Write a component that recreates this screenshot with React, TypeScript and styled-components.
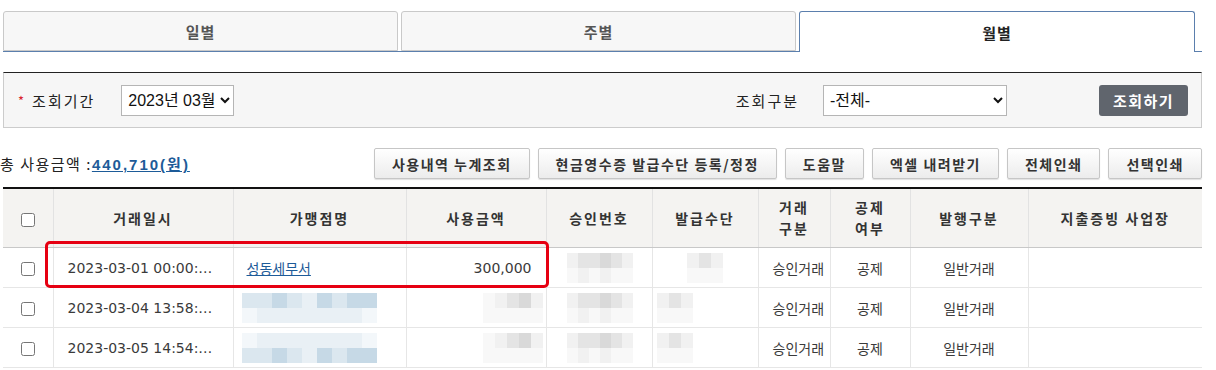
import React from "react";
import styled, { createGlobalStyle } from "styled-components";

const GlobalStyle = createGlobalStyle`
  body {
    margin: 0;
    background: #fff;
    font-family: "Noto Sans CJK KR", "Noto Sans", sans-serif;
    color: #333;
  }
`;

const KR = `"DejaVu Sans", "Noto Sans CJK KR", sans-serif`;

const Page = styled.div`
  width: 1199px;
  padding: 11px 14px 0 3px;
`;

const Tabs = styled.div`
  display: grid;
  grid-template-columns: 395px 395px 396px;
  gap: 3px;
  border-bottom: 1px solid #5b7fad;
  height: 40px;
`;

const Tab = styled.div<{ $active?: boolean }>`
  display: flex;
  align-items: center;
  justify-content: center;
  height: ${(p) => (p.$active ? "41px" : "40px")};
  border: 1px solid ${(p) => (p.$active ? "#5b7fad" : "#c9c9c9")};
  border-bottom: ${(p) => (p.$active ? "none" : "1px solid #c9c9c9")};
  border-radius: 3px 3px 0 0;
  background: ${(p) => (p.$active ? "#fff" : "#f7f7f7")};
  color: ${(p) => (p.$active ? "#222" : "#555")};
  font-size: 15px;
  font-weight: 700;
  letter-spacing: 1px;
  box-sizing: border-box;
`;

const SearchBox = styled.div`
  margin-top: 20px;
  height: 56px;
  box-sizing: border-box;
  border: 1px solid #cccccc;
  border-top: 1px solid #222;
  background: #f6f6f6;
  display: flex;
  align-items: center;
  padding: 0 13px 0 14px;
`;

const Star = styled.span`
  color: #d9232e;
  font-size: 13px;
  margin-right: 8px;
`;

const Label = styled.span<{ $gap: number }>`
  font-size: 15px;
  color: #222;
  letter-spacing: 2px;
  margin-right: ${(p) => p.$gap}px;
`;

const Select = styled.select<{ $w: number }>`
  width: ${(p) => p.$w}px;
  height: 31px;
  border: 1px solid #b5b5b5;
  border-radius: 0;
  background: #fff;
  font-family: "Liberation Sans", "Noto Sans CJK KR", sans-serif;
  font-size: 16px;
  color: #111;
  padding: 0 2px;
`;

const Spacer = styled.div`
  flex: 1;
`;

const SearchButton = styled.button`
  margin-left: 92px;
  width: 89px;
  height: 31px;
  border: none;
  border-radius: 3px;
  background: #60656d;
  color: #fff;
  font-family: inherit;
  font-size: 15px;
  font-weight: 700;
  letter-spacing: 1.5px;
`;

const SummaryRow = styled.div`
  margin-top: 20px;
  display: flex;
  align-items: center;
  height: 31px;
`;

const Total = styled.div`
  margin-left: -3px;
  font-size: 15px;
  color: #222;
  letter-spacing: 1.5px;
`;

const TotalLink = styled.a`
  color: #1d5b98;
  font-weight: 700;
  text-decoration: underline;
  font-family: "Liberation Sans", "Noto Sans CJK KR", sans-serif;
  font-size: 15px;
  letter-spacing: 2px;
`;

const Actions = styled.div`
  margin-left: auto;
  display: flex;
  gap: 8px;
`;

const ActionButton = styled.button`
  height: 31px;
  padding: 0 17px;
  border: 1px solid #c6c6c6;
  border-radius: 2px;
  background: linear-gradient(#ffffff, #ececec);
  box-shadow: 0 1px 1px rgba(0, 0, 0, 0.12);
  font-family: inherit;
  font-size: 14px;
  font-weight: 700;
  color: #333;
  letter-spacing: 1.5px;
`;

const TableWrap = styled.div`
  position: relative;
  margin-top: 8px;
`;

const Table = styled.table`
  width: 1199px;
  table-layout: fixed;
  border-collapse: collapse;
  border-top: 2px solid #111;
`;

const Th = styled.th`
  height: 58px;
  background: #f4f3f1;
  border-right: 1px solid #e2e2e2;
  border-bottom: 1px solid #c8c8c8;
  font-size: 14px;
  font-weight: 700;
  color: #333;
  letter-spacing: 2px;
  line-height: 21px;
  padding: 0;
  &:last-child {
    border-right: none;
  }
`;

const Td = styled.td<{ $align?: string }>`
  height: 39px;
  border-right: 1px solid #e6e6e6;
  border-bottom: 1px solid #e6e6e6;
  padding: 0 14px;
  text-align: ${(p) => p.$align || "center"};
  font-size: 14px;
  color: #3a3a3a;
  font-family: ${KR};
  white-space: nowrap;
  overflow: hidden;
  &:last-child {
    border-right: none;
  }
`;

const CheckTd = styled(Td)`
  padding: 0;
`;

const Check = styled.input`
  width: 14px;
  height: 14px;
  margin: 0;
  vertical-align: middle;
`;

const ShopLink = styled.a`
  color: #1d5b98;
  text-decoration: underline;
  font-size: 14px;
  margin-left: -1px;
`;

const Mosaic = styled.div<{ $cols: number; $cell: number; $shift: number }>`
  display: grid;
  grid-template-columns: repeat(${(p) => p.$cols}, ${(p) => p.$cell}px);
  grid-auto-rows: 15px;
  margin-left: ${(p) => p.$shift}px;
  filter: blur(0.6px);
`;

const Tile = styled.div<{ $c: string }>`
  background: ${(p) => p.$c};
`;

const Highlight = styled.div`
  position: absolute;
  left: 42px;
  top: 54px;
  width: 504px;
  height: 47px;
  box-sizing: border-box;
  border: 3px solid #e60012;
  border-radius: 5px;
  pointer-events: none;
`;

type MosaicProps = { tiles: string[]; cols: number; cell: number; shift: number };

const Blur = ({ tiles, cols, cell, shift }: MosaicProps) => (
  <Mosaic $cols={cols} $cell={cell} $shift={shift}>
    {tiles.map((c, i) => (
      <Tile key={i} $c={c} />
    ))}
  </Mosaic>
);

const G1 = "#f1f1f1";
const G2 = "#e4e4e4";
const G3 = "#d9d9d9";
const G0 = "#f8f8f8";
const B1 = "#dbe7ef";
const B2 = "#c6d9e6";
const B3 = "#e9f0f5";
const B0 = "#f3f7fa";

const approvalA = [G1, G2, G2, G3, G2, G1, G0, G1, G0, G1, G0, G0];
const issueA = [G1, G2, G1, G0, G0, G0];
const shopTop = [B1, B1, B2, B1, B3, B2, B1, B2, B2];
const shopBot = [B0, B3, B3, B3, B3, B3, B3, B3, B0];

const rows = [
  { date: "2023-03-01 00:00:…", first: true },
  { date: "2023-03-04 13:58:…", first: false, shop: [...shopTop, ...shopBot] },
  { date: "2023-03-05 14:54:…", first: false, shop: [...shopBot, ...shopTop] },
];

const cols = [50, 180, 173, 140, 106, 106, 72, 80, 118, 174];

const App: React.FC = () => {
  return (
    <Page>
      <GlobalStyle />
      <Tabs>
        <Tab>일별</Tab>
        <Tab>주별</Tab>
        <Tab $active>월별</Tab>
      </Tabs>

      <SearchBox>
        <Star>*</Star>
        <Label $gap={26}>조회기간</Label>
        <Select $w={113} defaultValue="03">
          <option value="03">2023년 03월</option>
        </Select>
        <Spacer />
        <Label $gap={24}>조회구분</Label>
        <Select $w={184} defaultValue="all">
          <option value="all">-전체-</option>
        </Select>
        <SearchButton>조회하기</SearchButton>
      </SearchBox>

      <SummaryRow>
        <Total>
          총 사용금액 :<TotalLink href="#">440,710(원)</TotalLink>
        </Total>
        <Actions>
          <ActionButton>사용내역 누계조회</ActionButton>
          <ActionButton>현금영수증 발급수단 등록/정정</ActionButton>
          <ActionButton>도움말</ActionButton>
          <ActionButton>엑셀 내려받기</ActionButton>
          <ActionButton>전체인쇄</ActionButton>
          <ActionButton>선택인쇄</ActionButton>
        </Actions>
      </SummaryRow>

      <TableWrap>
        <Table>
          <colgroup>
            {cols.map((w, i) => (
              <col key={i} style={{ width: w }} />
            ))}
          </colgroup>
          <thead>
            <tr>
              <Th>
                <Check type="checkbox" />
              </Th>
              <Th>거래일시</Th>
              <Th>가맹점명</Th>
              <Th>사용금액</Th>
              <Th>승인번호</Th>
              <Th>발급수단</Th>
              <Th>
                거래
                <br />
                구분
              </Th>
              <Th>
                공제
                <br />
                여부
              </Th>
              <Th>발행구분</Th>
              <Th>지출증빙 사업장</Th>
            </tr>
          </thead>
          <tbody>
            {rows.map((r) => (
              <tr key={r.date}>
                <CheckTd>
                  <Check type="checkbox" />
                </CheckTd>
                <Td $align="left">{r.date}</Td>
                <Td $align="left">
                  {r.first ? (
                    <ShopLink href="#">성동세무서</ShopLink>
                  ) : (
                    <Blur tiles={r.shop!} cols={9} cell={15} shift={-6} />
                  )}
                </Td>
                <Td $align="right">
                  {r.first ? (
                    "300,000"
                  ) : (
                    <Blur tiles={[G0, G1, G2, G3, G1, G0, G0, G0, G0, G0]} cols={5} cell={12} shift={62} />
                  )}
                </Td>
                <Td $align="left">
                  <Blur tiles={approvalA} cols={6} cell={11} shift={6} />
                </Td>
                <Td $align="left">
                  <Blur tiles={issueA} cols={3} cell={12} shift={r.first ? 20 : -10} />
                </Td>
                <Td>승인거래</Td>
                <Td>공제</Td>
                <Td>일반거래</Td>
                <Td />
              </tr>
            ))}
          </tbody>
        </Table>
        <Highlight />
      </TableWrap>
    </Page>
  );
};

export default App;
